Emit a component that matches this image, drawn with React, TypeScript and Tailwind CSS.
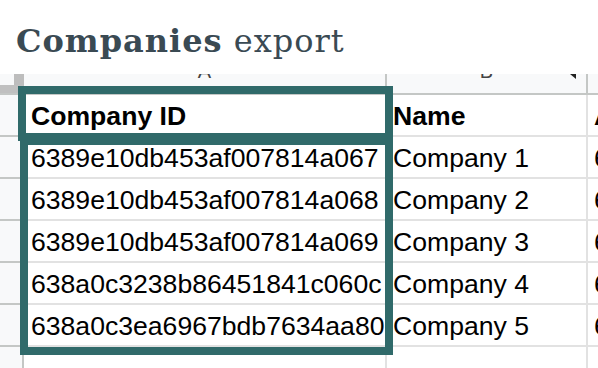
import React from "react";

const rows = [
  ["6389e10db453af007814a067", "Company 1", "6389e10db453af007814a0aa"],
  ["6389e10db453af007814a068", "Company 2", "6389e10db453af007814a0ab"],
  ["6389e10db453af007814a069", "Company 3", "6389e10db453af007814a0ac"],
  ["638a0c3238b86451841c060c", "Company 4", "638a0c3238b86451841c0610"],
  ["638a0c3ea6967bdb7634aa80", "Company 5", "638a0c3ea6967bdb7634aa84"],
];

export default function App() {
  return (
    <div className="relative w-[598px] h-[368px] overflow-hidden bg-white" style={{ fontFamily: '"Liberation Sans", Arial, sans-serif' }}>
      {/* Title */}
      <div className="h-[74px] pl-[16px] pt-[25px]">
        <div className="text-[32px] leading-none tracking-[1px] text-[#3a4a53] whitespace-nowrap" style={{ fontFamily: '"DejaVu Serif", serif' }}>
          <span className="font-bold">Companies</span> <span>export</span>
        </div>
      </div>

      {/* Column header band */}
      <div className="flex h-[21px] bg-[#f8f9fa] border-b-2 border-[#c4c7c5] overflow-hidden">
        <div className="relative w-[24px] shrink-0">
          <div className="absolute left-[14px] top-0 w-[10px] h-[11px] bg-[#bdbdbd]" />
          <div className="absolute left-0 top-[11px] w-[24px] h-[8px] bg-[#c0c0c0]" />
        </div>
        <div className="w-[363px] shrink-0 border-r-2 border-[#c4c7c5] flex justify-center items-start overflow-hidden">
          <span className="-mt-[13px] text-[20px] leading-[20px] text-[#444]">A</span>
        </div>
        <div className="relative w-[201px] shrink-0 border-r-2 border-[#c4c7c5] flex justify-center items-start overflow-hidden">
          <span className="-mt-[13px] text-[20px] leading-[20px] text-[#444]">B</span>
          <svg className="absolute right-[10px] top-0" width="6" height="5" viewBox="0 0 6 5">
            <polygon points="0,0 6,0 6,5" fill="#222" />
          </svg>
        </div>
        <div className="flex-1" />
      </div>

      {/* Header row */}
      <div className="flex h-[42px] text-[26.6px] text-black">
        <div className="w-[24px] shrink-0 bg-[#f8f9fa] border-r-2 border-b-2 border-[#c4c7c5]" />
        <div className="w-[363px] shrink-0 border-r-2 border-b-2 border-[#e2e2e2] pl-[7px] leading-[42px] font-bold whitespace-nowrap overflow-hidden">
          Company ID
        </div>
        <div className="w-[201px] shrink-0 border-r-2 border-b-2 border-[#e2e2e2] pl-[6px] leading-[42px] font-bold whitespace-nowrap overflow-hidden">
          Name
        </div>
        <div className="flex-1 border-b-2 border-[#e2e2e2] pl-[6px] leading-[42px] font-bold whitespace-nowrap overflow-hidden">
          Address
        </div>
      </div>

      {rows.map((r, i) => (
        <div key={i} className="flex h-[42px] text-[26.6px] text-black">
          <div className="w-[24px] shrink-0 bg-[#f8f9fa] border-r-2 border-b-2 border-[#c4c7c5]" />
          <div className="w-[363px] shrink-0 border-r-2 border-b-2 border-[#e2e2e2] pl-[7px] leading-[42px] whitespace-nowrap overflow-hidden">
            {r[0]}
          </div>
          <div className="w-[201px] shrink-0 border-r-2 border-b-2 border-[#e2e2e2] pl-[6px] leading-[42px] whitespace-nowrap overflow-hidden">
            {r[1]}
          </div>
          <div className="flex-1 border-b-2 border-[#e2e2e2] pl-[6px] leading-[42px] whitespace-nowrap overflow-hidden">
            {r[2]}
          </div>
        </div>
      ))}

      {/* Empty row */}
      <div className="flex h-[42px]">
        <div className="w-[24px] shrink-0 bg-[#f8f9fa] border-r-2 border-[#c4c7c5]" />
        <div className="w-[363px] shrink-0 border-r-2 border-[#e2e2e2]" />
        <div className="w-[201px] shrink-0 border-r-2 border-[#e2e2e2]" />
        <div className="flex-1" />
      </div>

      {/* Selection overlays */}
      <div className="absolute left-[18px] top-[86px] w-[375px] h-[55px] border-[8px] border-[#306a6a] pointer-events-none" />
      <div className="absolute left-[20px] top-[137px] w-[373px] h-[218px] border-[8px] border-[#306a6a] pointer-events-none" />
    </div>
  );
}
